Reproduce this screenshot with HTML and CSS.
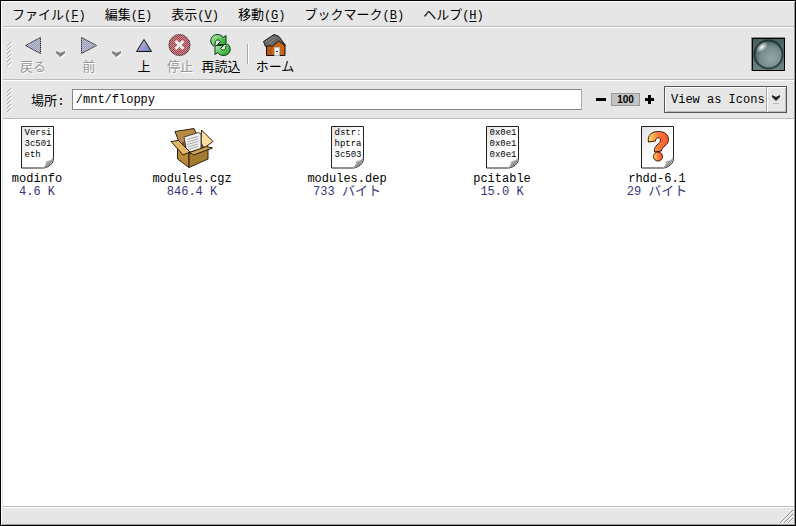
FILE: index.html
```html
<!DOCTYPE html>
<html lang="ja">
<head>
  <meta charset="UTF-8">
  <title>/mnt/floppy</title>
  <link rel="stylesheet" href="styles.css">
</head>
<body>
  <div class="window">
    <nav class="menubar">
      <button class="menu">ファイル<span class="key">(<u>F</u>)</span></button>
      <button class="menu">編集<span class="key">(<u>E</u>)</span></button>
      <button class="menu">表示<span class="key">(<u>V</u>)</span></button>
      <button class="menu">移動<span class="key">(<u>G</u>)</span></button>
      <button class="menu">ブックマーク<span class="key">(<u>B</u>)</span></button>
      <button class="menu">ヘルプ<span class="key">(<u>H</u>)</span></button>
    </nav>

    <div class="toolbar">
      <svg class="handle" width="6" height="26" viewBox="0 0 6 26"><path d="M1 5l4-4M1 9l4-4M1 13l4-4M1 17l4-4M1 21l4-4M1 25l4-4" stroke="#aaa"/><path d="M2 6l4-4M2 10l4-4M2 14l4-4M2 18l4-4M2 22l4-4M2 26l4-4" stroke="#fff"/></svg>

      <button class="tool" disabled>
        <svg width="24" height="24" viewBox="0 0 24 24">
          <defs>
            <pattern id="stipple" width="2" height="2" patternUnits="userSpaceOnUse">
              <path d="M0 0h1v1H0zM1 1h1v1H1z" fill="#e6e6e6" fill-opacity=".5" shape-rendering="crispEdges"/>
            </pattern>
          </defs>
          <path d="M4.500 12.500L19.500 4.500v16z" fill="#9a9dbd" stroke="#333"/>
          <path d="M4 12.500L20 4v17z" fill="url(#stipple)"/>
        </svg>
        <span>戻る</span>
      </button>
      <button class="drop" aria-label="戻る履歴" disabled>
        <svg width="10" height="8" viewBox="0 0 10 8"><path d="M1 2l4 2 4-2v1L5 7 1 3z" fill="#fff" transform="translate(1 1)"/><path d="M0 1l4.500 2L9 1v2L4.500 7 0 3z" fill="#808080"/></svg>
      </button>
      <button class="tool" disabled>
        <svg width="24" height="24" viewBox="0 0 24 24">
          <path d="M19.500 12.500L4.500 4.500v16z" fill="#9a9dbd" stroke="#333"/>
          <path d="M20 12.500L4 4v17z" fill="url(#stipple)"/>
        </svg>
        <span>前</span>
      </button>
      <button class="drop" aria-label="前の履歴" disabled>
        <svg width="10" height="8" viewBox="0 0 10 8"><path d="M1 2l4 2 4-2v1L5 7 1 3z" fill="#fff" transform="translate(1 1)"/><path d="M0 1l4.500 2L9 1v2L4.500 7 0 3z" fill="#808080"/></svg>
      </button>
      <button class="tool narrow">
        <svg width="24" height="24" viewBox="0 0 24 24">
          <defs><linearGradient id="blue" x2="1" y2="1"><stop offset="0" stop-color="#c8cbef"/><stop offset="1" stop-color="#6d74b5"/></linearGradient></defs>
          <path d="M12 6.500L19.500 18.500h-15z" fill="url(#blue)" stroke="#111"/>
        </svg>
        <span>上</span>
      </button>
      <button class="tool narrow" disabled>
        <svg width="24" height="24" viewBox="0 0 24 24">
          <circle cx="11.500" cy="12" r="10.500" fill="#a83c46" stroke="#3a2426"/>
          <circle cx="11.500" cy="12" r="11" fill="url(#stipple)"/>
          <path d="M7.500 8l8 8M15.500 8l-8 8" stroke="#eee" stroke-width="3"/>
        </svg>
        <span>停止</span>
      </button>
      <button class="tool wide">
        <svg width="24" height="24" viewBox="0 0 24 24">
          <defs><linearGradient id="green" x2="1" y2="1"><stop offset="0" stop-color="#c4f2bb"/><stop offset=".6" stop-color="#52bd50"/><stop offset="1" stop-color="#2a9a35"/></linearGradient></defs>
          <path d="M4.500 13C0 10 1 2 8 1.500c3 0 5 1 6 3l3-2v9H8.500l3-3C9.500 6 7 7 6.500 8.500c0 1.500 0 3-2 4.500z" fill="url(#green)" stroke="#0b3b12" stroke-linejoin="round"/>
          <path d="M18.500 11c4.500 3 3.500 11-3.500 11.500-3 0-5-1-6-3l-3 2v-9h8.500l-3 3c2 2.500 4.500 1.500 5 0 0-1.500 0-3 2-4.500z" fill="url(#green)" stroke="#0b3b12" stroke-linejoin="round"/>
        </svg>
        <span>再読込</span>
      </button>
      <span class="separator"></span>
      <button class="tool wide">
        <svg width="24" height="24" viewBox="0 0 24 24">
          <path d="M3.500 12L8 8l8-2 6 7v9.500H3.500z" fill="#b8560f" stroke="#111"/>
          <path d="M9 13l5-6 7 6v9H9z" fill="#c9641a"/>
          <path d="M.5 8.500L11 1.500l5 2 6.500 9-7-4.500-6 5.500-2-1-5 1z" fill="#676967" stroke="#161616" stroke-linejoin="round"/>
          <path d="M3 9l8-6M6 11l7-7" stroke="#8a8c8a"/>
          <path d="M11.500 14.500h5v8h-5z" fill="#f4f4f4" stroke="#bbb"/>
          <path d="M13 18h2v1h-2z" fill="#222"/>
        </svg>
        <span>ホーム</span>
      </button>

      <svg class="throbber" width="34" height="34" viewBox="0 0 34 34">
        <defs>
          <linearGradient id="frame" x2="0" y2="1"><stop offset="0" stop-color="#47615f"/><stop offset="1" stop-color="#688380"/></linearGradient>
          <radialGradient id="ball" cx=".6" cy=".62" r=".6"><stop offset="0" stop-color="#94a5a7"/><stop offset=".65" stop-color="#778c8d"/><stop offset="1" stop-color="#4b6062"/></radialGradient>
          <radialGradient id="shine"><stop offset="0" stop-color="#fff"/><stop offset="1" stop-color="#fff" stop-opacity="0"/></radialGradient>
        </defs>
        <rect width="34" height="34" fill="#8c8c8c"/>
        <rect x="1" y="1" width="33" height="33" fill="#000"/>
        <rect x="2" y="2" width="31" height="31" fill="url(#frame)"/>
        <circle cx="17.500" cy="17.500" r="14" fill="url(#ball)" stroke="#142224" stroke-opacity=".7" stroke-width="2"/>
        <ellipse cx="11" cy="10" rx="7" ry="4" fill="url(#shine)" transform="rotate(-40 11 10)"/>
      </svg>
    </div>

    <div class="location">
      <svg class="handle" width="6" height="26" viewBox="0 0 6 26"><path d="M1 5l4-4M1 9l4-4M1 13l4-4M1 17l4-4M1 21l4-4M1 25l4-4" stroke="#aaa"/><path d="M2 6l4-4M2 10l4-4M2 14l4-4M2 18l4-4M2 22l4-4M2 26l4-4" stroke="#fff"/></svg>
      <label for="path">場所:</label>
      <input type="text" id="path" value="/mnt/floppy">
      <div class="zoom">
        <button aria-label="縮小"><svg width="10" height="10" viewBox="0 0 10 10"><path d="M0 3h10v3H0z"/></svg></button>
        <button class="level">100</button>
        <button aria-label="拡大"><svg width="10" height="10" viewBox="0 0 10 10"><path d="M0 3h3V0h3v3h3v3H6v3H3V6H0z"/></svg></button>
      </div>
      <div class="view">
        <select aria-label="表示形式">
          <option>View as Icons</option>
          <option>View as List</option>
        </select>
        <svg class="view-arrow" width="20" height="25" viewBox="0 0 20 25"><path d="M.5 0v25" stroke="#aaa"/><path d="M1.500 0v25" stroke="#fff"/><path d="M6 8l4 2 4-2v2l-4 4-4-4z" fill="#222"/><path d="M7 16h6v1H7z" fill="#bbb"/></svg>
      </div>
    </div>

    <main class="files">
      <a class="file" href="#modinfo">
        <span class="page">
          <svg width="33" height="43" viewBox="0 0 33 43">
            <defs>
              <linearGradient id="paper" x2="1" y2="1"><stop offset="0" stop-color="#e2e2e2"/><stop offset=".5" stop-color="#fff"/></linearGradient>
              <linearGradient id="curl" x2="1" y2="1"><stop offset="0" stop-color="#fff"/><stop offset=".5" stop-color="#aaa"/><stop offset="1" stop-color="#444"/></linearGradient>
            </defs>
            <path d="M.5.5h32v32c0 5-5 9-10 9.500H.5z" fill="url(#paper)" stroke="#222"/>
            <path d="M32 31c-1 3-4 4-7 4 0 3-1 6-4 7 6 0 11-5 11-11z" fill="url(#curl)"/>
          </svg>
          <span class="preview">Versi<br>3c501<br>eth</span>
        </span>
        <span class="name">modinfo</span>
        <span class="size">4.6 K</span>
      </a>
      <a class="file" href="#modules.cgz">
        <svg width="44" height="43" viewBox="0 0 44 43">
          <path d="M5 5.500L24 2.500l3 7-17 9z" fill="#b78a42" stroke="#2d2008"/>
          <path d="M8 19l20-9 10 9-2 5-16 4z" fill="#7d5b20"/>
          <path d="M31.500 4L43 15.500 34 22l-3-5z" fill="#ffdda0" stroke="#2d2008"/>
          <path d="M14 11L28.500 6.500 31 8v15l-14 4z" fill="#efefef" stroke="#444"/>
          <path d="M17 13.500l11-3M17 16l11-3M17 18.500l11-3M18 21l10-3M18 23.500l10-3" stroke="#aaa"/>
          <path d="M7.500 19L19 27.500v14L7.500 33z" fill="#b8893b" stroke="#2d2008"/>
          <path d="M19 27.500L38 22v11l-19 8.500z" fill="#a57b31" stroke="#2d2008"/>
          <path d="M1 15.500l7.500-1L20 26l-7 3z" fill="#dfb566" stroke="#2d2008"/>
          <path d="M19.500 26.500l17-6 6 1.500-19 7z" fill="#cda457" stroke="#2d2008"/>
        </svg>
        <span class="name">modules.cgz</span>
        <span class="size">846.4 K</span>
      </a>
      <a class="file" href="#modules.dep">
        <span class="page">
          <svg width="33" height="43" viewBox="0 0 33 43">
            <path d="M.5.5h32v32c0 5-5 9-10 9.500H.5z" fill="url(#paper)" stroke="#222"/>
            <path d="M32 31c-1 3-4 4-7 4 0 3-1 6-4 7 6 0 11-5 11-11z" fill="url(#curl)"/>
          </svg>
          <span class="preview">dstr:<br>hptra<br>3c503</span>
        </span>
        <span class="name">modules.dep</span>
        <span class="size">733 <span class="ja">バイト</span></span>
      </a>
      <a class="file" href="#pcitable">
        <span class="page">
          <svg width="33" height="43" viewBox="0 0 33 43">
            <path d="M.5.5h32v32c0 5-5 9-10 9.500H.5z" fill="url(#paper)" stroke="#222"/>
            <path d="M32 31c-1 3-4 4-7 4 0 3-1 6-4 7 6 0 11-5 11-11z" fill="url(#curl)"/>
          </svg>
          <span class="preview">0x0e1<br>0x0e1<br>0x0e1</span>
        </span>
        <span class="name">pcitable</span>
        <span class="size">15.0 K</span>
      </a>
      <a class="file" href="#rhdd-6.1">
        <svg width="33" height="43" viewBox="0 0 33 43">
          <defs><linearGradient id="orange"><stop offset="0" stop-color="#ffe066"/><stop offset=".5" stop-color="#ff7b3c"/><stop offset="1" stop-color="#f2582d"/></linearGradient></defs>
          <path d="M.5.5h32v32c0 5-5 9-10 9.500H.5z" fill="url(#paper)" stroke="#222"/>
          <path d="M32 31c-1 3-4 4-7 4 0 3-1 6-4 7 6 0 11-5 11-11z" fill="url(#curl)"/>
          <path d="M7.500 16C6 9 11 5.500 17.500 5.500c6 0 10 3 10 8 0 6-7 7-7 11.500l-7 1c-1-7 6-8 6-12 0-3-5-3-5 1z" fill="url(#orange)" stroke="#3a1a0a" stroke-linejoin="round"/>
          <circle cx="17" cy="30.500" r="4.500" fill="url(#orange)" stroke="#3a1a0a"/>
        </svg>
        <span class="name">rhdd-6.1</span>
        <span class="size">29 <span class="ja">バイト</span></span>
      </a>
    </main>

    <footer class="statusbar">
      <svg width="14" height="14" viewBox="0 0 14 14"><path d="M1 14L14 1M5 14l9-9M9 14l5-5" stroke="#888"/><path d="M2 14L14 2M6 14l8-8M10 14l4-4" stroke="#fff"/></svg>
    </footer>
  </div>
</body>
</html>
```
FILE: styles.css
```css
* {
  box-sizing: border-box;
}

body {
  margin: 0;
  font-family: "Liberation Mono", "Noto Sans CJK JP", monospace;
  font-size: 12px;
  color: #000;
  background: #e6e6e6;
}

button {
  margin: 0;
  padding: 0;
  border: none;
  background: none;
  font: inherit;
  color: inherit;
}

svg {
  display: block;
  fill: none;
}

.window {
  min-height: 100vh;
  display: flex;
  flex-direction: column;
  border: 1px solid #000;
  padding: 1px 1px 1px 2px;
  background: #e6e6e6;
  box-shadow: inset 1px 1px #fff, inset -1px -1px #999;
}

/* menu */
.menubar {
  display: flex;
  gap: 19px;
  height: 25px;
  padding: 0 9px 2px;
  border-bottom: 1px solid #bbb;
}

.menu {
  font-size: 13px;
  white-space: nowrap;
}

.key {
  font-size: 12px;
}

.key u {
  text-underline-offset: 2px;
}

/* toolbar */
.toolbar {
  display: flex;
  align-items: center;
  height: 53px;
  padding: 0 9px 0 3px;
  border-top: 1px solid #fff;
  border-bottom: 1px solid #bbb;
}

.handle {
  flex: none;
  margin-right: 2px;
}

.tool {
  width: 38px;
  padding-top: 4px;
  display: flex;
  flex-direction: column;
  align-items: center;
  font-size: 13px;
  line-height: 22px;
  white-space: nowrap;
}

.narrow {
  width: 36px;
}

.wide {
  width: 46px;
}

.tool:disabled {
  color: #999;
  text-shadow: 1px 1px #fff;
}

.drop {
  width: 18px;
  display: flex;
  justify-content: center;
}

.separator {
  width: 2px;
  height: 20px;
  margin: 0 3px;
  border-left: 1px solid #aaa;
  border-right: 1px solid #fff;
}

.throbber {
  margin-left: auto;
}

/* location bar */
.location {
  display: flex;
  align-items: center;
  height: 39px;
  padding: 0 7px 0 3px;
  border-top: 1px solid #fff;
  border-bottom: 1px solid #bbb;
}

.location label {
  margin: 0 7px 0 17px;
  font-size: 13px;
  white-space: nowrap;
}

.location input {
  flex: 1;
  min-width: 0;
  height: 21px;
  padding: 0 3px;
  border: 1px solid #888;
  border-right-color: #aaa;
  background: #fff;
  font: inherit;
}

.zoom {
  display: flex;
  align-items: center;
  gap: 5px;
  margin: 0 9px 0 14px;
}

.zoom svg {
  fill: #000;
}

.level {
  width: 29px;
  height: 13px;
  border: 1px solid #999;
  background: #c3c3c3;
  font: bold 10px/11px "Liberation Sans", sans-serif;
}

.view {
  position: relative;
  width: 123px;
}

.view select {
  appearance: none;
  width: 100%;
  height: 27px;
  padding: 0 6px;
  border: 1px solid #555;
  border-radius: 0;
  background: #e6e6e6;
  box-shadow: inset 1px 1px #fff, inset -1px -1px #bbb;
  font: inherit;
  color: inherit;
}

.view-arrow {
  position: absolute;
  top: 1px;
  right: 1px;
  pointer-events: none;
}

/* file icons */
.files {
  flex: 1;
  display: grid;
  grid-template-columns: repeat(auto-fill, 68px);
  column-gap: 87px;
  row-gap: 20px;
  align-content: start;
  padding-top: 7px;
  background: #fff;
}

.file {
  display: flex;
  flex-direction: column;
  align-items: center;
  line-height: 13px;
  white-space: nowrap;
  color: #000;
  text-decoration: none;
}

.name {
  margin-top: 4px;
}

.size {
  color: #35357f;
}

.ja {
  font-size: 13px;
  line-height: 12px;
}

.page {
  position: relative;
}

.preview {
  position: absolute;
  top: 2px;
  left: 4px;
  font-size: 9px;
  line-height: 11px;
}

.statusbar {
  display: flex;
  justify-content: flex-end;
  align-items: flex-end;
  height: 18px;
  padding: 0 1px 1px 0;
  border-top: 1px solid #bbb;
  box-shadow: inset 0 1px #fff;
}
```
